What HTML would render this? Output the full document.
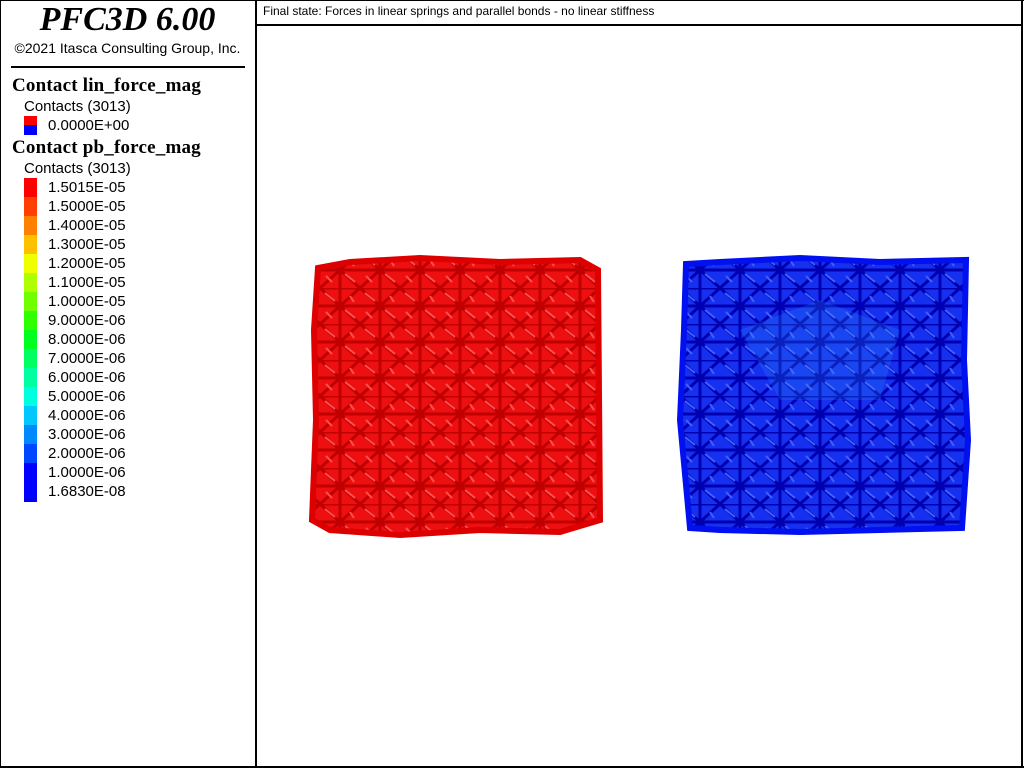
<!DOCTYPE html>
<html><head><style>
body{margin:0;width:1024px;height:768px;background:#fff;position:relative;overflow:hidden;font-family:"Liberation Sans",sans-serif}
.a{position:absolute}
.lbl{position:absolute;left:48px;font-size:15px;color:#000;line-height:19px}
.blk{position:absolute;left:24px;width:13px}
.h{font-family:"Liberation Serif",serif;font-weight:bold;font-size:19px;left:12px;letter-spacing:0.2px}
</style></head><body>
<div class="a" style="left:0;top:0;width:1px;height:768px;background:#000"></div>
<div class="a" style="left:0;top:0;width:1024px;height:1px;background:#000"></div>
<div class="a" style="left:0;top:766px;width:1024px;height:2px;background:#000"></div>
<div class="a" style="left:1021px;top:0;width:2px;height:768px;background:#000"></div>
<div class="a" style="left:255px;top:0;width:2px;height:768px;background:#000"></div>
<div class="a" style="left:257px;top:24px;width:766px;height:2px;background:#000"></div>
<div class="a" style="left:263px;top:4px;font-size:12px">Final state: Forces in linear springs and parallel bonds - no linear stiffness</div>
<div class="a" style="left:0;width:255px;top:1px;text-align:center;font-family:'Liberation Serif',serif;font-style:italic;font-weight:bold;font-size:34px">PFC3D 6.00</div>
<div class="a" style="left:0;width:255px;top:40px;text-align:center;font-size:14px">©2021 Itasca Consulting Group, Inc.</div>
<div class="a" style="left:11px;top:66px;width:234px;height:2px;background:#000"></div>
<div class="a h" style="top:75px">Contact lin_force_mag</div>
<div class="lbl" style="left:24px;top:97px">Contacts (3013)</div>
<div class="blk" style="top:116px;height:9px;background:#f00"></div>
<div class="blk" style="top:125px;height:10px;background:#00f"></div>
<div class="lbl" style="top:116px">0.0000E+00</div>
<div class="a h" style="top:137px">Contact pb_force_mag</div>
<div class="lbl" style="left:24px;top:159px">Contacts (3013)</div>
<div class="blk" style="top:178px;height:19px;background:#f00"></div>
<div class="blk" style="top:197px;height:19px;background:#ff4000"></div>
<div class="blk" style="top:216px;height:19px;background:#ff8000"></div>
<div class="blk" style="top:235px;height:19px;background:#ffc000"></div>
<div class="blk" style="top:254px;height:19px;background:#f0ff00"></div>
<div class="blk" style="top:273px;height:19px;background:#b0ff00"></div>
<div class="blk" style="top:292px;height:19px;background:#70ff00"></div>
<div class="blk" style="top:311px;height:19px;background:#30ff00"></div>
<div class="blk" style="top:330px;height:19px;background:#00ff20"></div>
<div class="blk" style="top:349px;height:19px;background:#00ff60"></div>
<div class="blk" style="top:368px;height:19px;background:#00ffa0"></div>
<div class="blk" style="top:387px;height:19px;background:#00ffe0"></div>
<div class="blk" style="top:406px;height:19px;background:#00c8ff"></div>
<div class="blk" style="top:425px;height:19px;background:#0088ff"></div>
<div class="blk" style="top:444px;height:19px;background:#0048ff"></div>
<div class="blk" style="top:463px;height:39px;background:#0000ff"></div>
<div class="lbl" style="top:178px">1.5015E-05</div>
<div class="lbl" style="top:197px">1.5000E-05</div>
<div class="lbl" style="top:216px">1.4000E-05</div>
<div class="lbl" style="top:235px">1.3000E-05</div>
<div class="lbl" style="top:254px">1.2000E-05</div>
<div class="lbl" style="top:273px">1.1000E-05</div>
<div class="lbl" style="top:292px">1.0000E-05</div>
<div class="lbl" style="top:311px">9.0000E-06</div>
<div class="lbl" style="top:330px">8.0000E-06</div>
<div class="lbl" style="top:349px">7.0000E-06</div>
<div class="lbl" style="top:368px">6.0000E-06</div>
<div class="lbl" style="top:387px">5.0000E-06</div>
<div class="lbl" style="top:406px">4.0000E-06</div>
<div class="lbl" style="top:425px">3.0000E-06</div>
<div class="lbl" style="top:444px">2.0000E-06</div>
<div class="lbl" style="top:463px">1.0000E-06</div>
<div class="lbl" style="top:482px">1.6830E-08</div>
<svg class="a" style="left:0;top:0" width="1024" height="768">
<defs>
<pattern id="pr" width="40" height="36" patternUnits="userSpaceOnUse">
<rect width="40" height="36" fill="#ee1010"/>
<path d="M0 0L40 0L20 18L0 0M0 36L20 18L40 36M0 18L40 18M20 0L20 36" stroke="#c00000" stroke-width="3" fill="none"/>
<path d="M5 5L15 13M25 22L35 30M30 8L34 14M6 24L12 30" stroke="#ff5050" stroke-width="2"/>
</pattern>
<pattern id="pb" width="40" height="36" patternUnits="userSpaceOnUse">
<rect width="40" height="36" fill="#1530ee"/>
<path d="M0 0L40 0L20 18L0 0M0 36L20 18L40 36M0 18L40 18M20 0L20 36" stroke="#0000b0" stroke-width="3" fill="none"/>
<path d="M5 5L15 13M25 22L35 30M30 8L34 14M6 24L12 30" stroke="#4060ff" stroke-width="2"/>
</pattern>
</defs>
<path d="M318 268L350 262L420 258L500 262L580 260L598 270L600 520L560 532L480 530L400 535L330 530L312 520L316 420L314 330Z" fill="url(#pr)" stroke="#dd0000" stroke-width="6"/>
<path d="M686 264L720 262L800 258L880 262L966 260L964 360L968 440L962 528L880 530L800 532L720 530L690 528L680 420L684 330Z" fill="url(#pb)" stroke="#0010ee" stroke-width="6"/>
<path d="M740 330L820 300L900 330L880 400L780 400Z" fill="#30a0ff" opacity="0.2"/>
</svg>
</body></html>
